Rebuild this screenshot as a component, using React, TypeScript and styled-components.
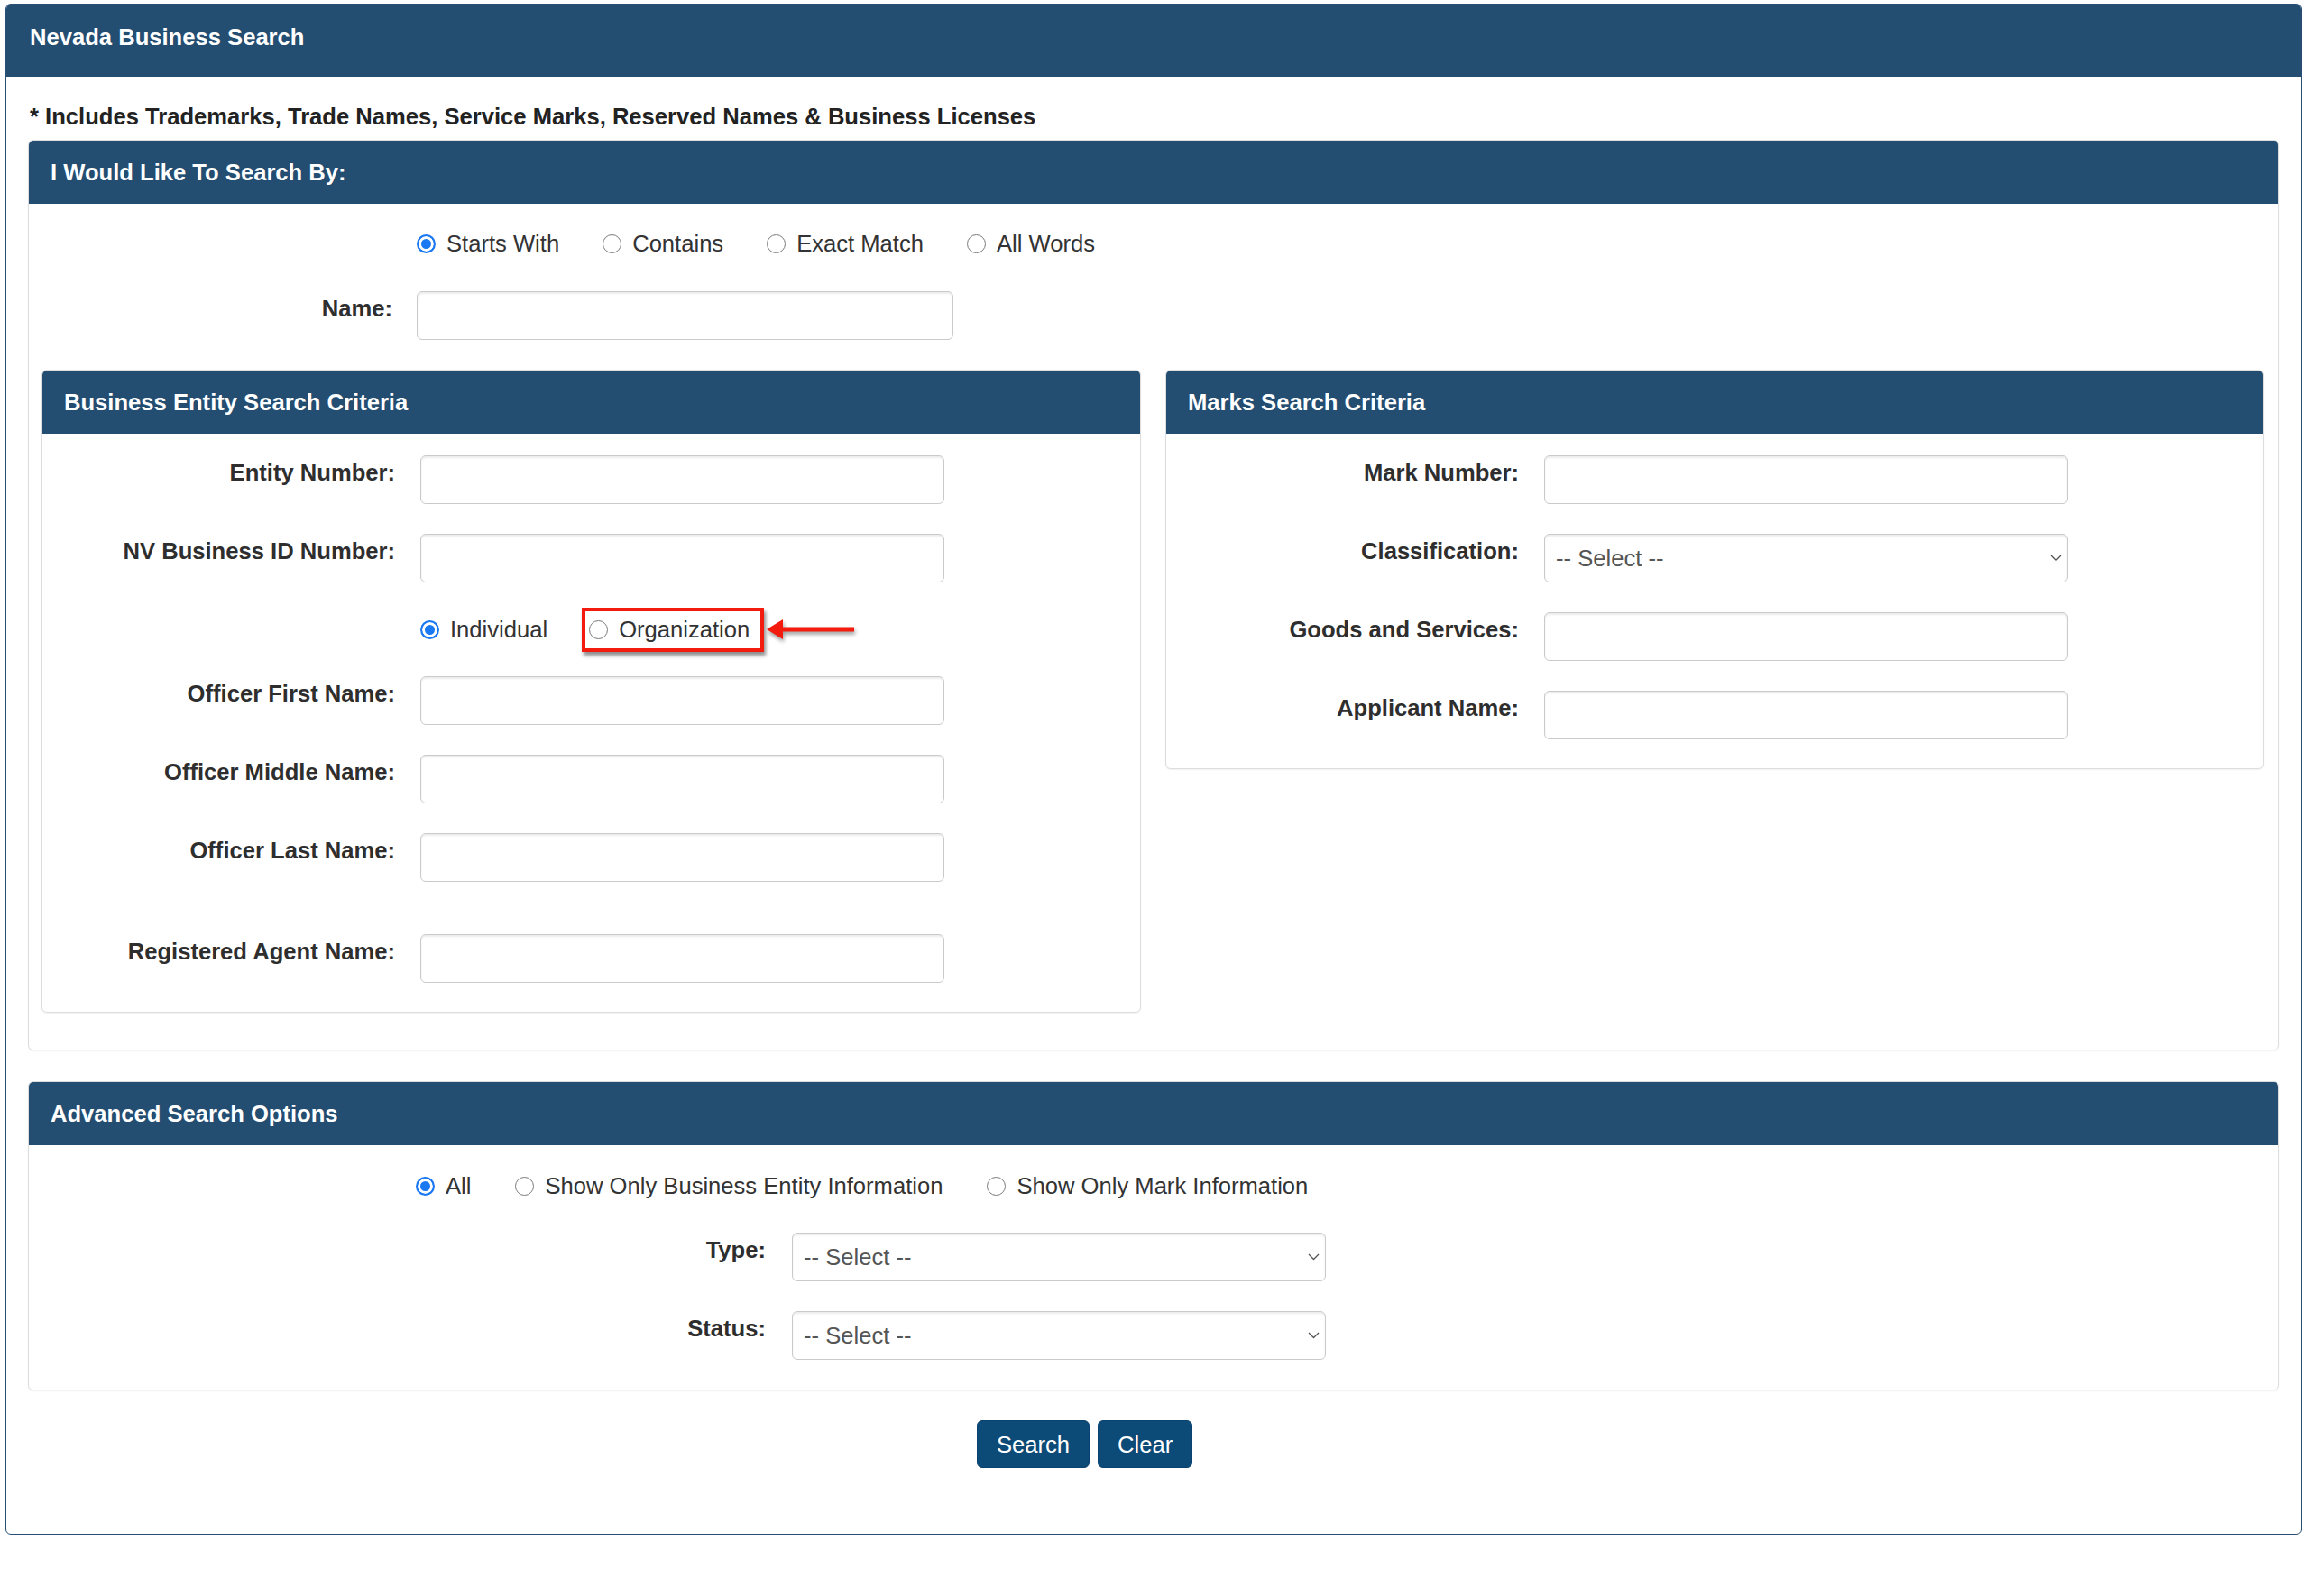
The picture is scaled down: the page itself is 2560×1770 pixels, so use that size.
import React from "react";
import styled, { createGlobalStyle } from "styled-components";

const GlobalStyle = createGlobalStyle`
  html, body {
    margin: 0;
    padding: 0;
    background: #fff;
  }
  body {
    font-family: "Liberation Sans", Arial, Helvetica, sans-serif;
    font-size: 25.6px;
    line-height: 30px;
    color: #333;
  }
  * {
    box-sizing: border-box;
  }
`;

const Page = styled.div`
  padding: 4px 8px 60px 6px;
`;

const Outer = styled.div`
  width: 2546px;
  border: 1px solid #2a4f74;
  border-radius: 6px;
  overflow: hidden;
  background: #fff;
`;

const TopBar = styled.div`
  height: 80px;
  padding: 21px 26px 0;
  background: #234d71;
  color: #fff;
  font-weight: 700;
`;

const Body = styled.div`
  padding: 29px 24px 73px;
`;

const Note = styled.div`
  font-weight: 700;
  color: #222;
  margin: 0 0 11px 2px;
`;

const Panel = styled.section<{ $mt?: number }>`
  margin-top: ${(p) => p.$mt ?? 0}px;
  border: 1px solid #ddd;
  border-radius: 6px;
  background: #fff;
  box-shadow: 0 1px 2px rgba(0, 0, 0, 0.06);
  overflow: hidden;
`;

const PanelHeading = styled.div`
  height: 70px;
  padding: 20px 24px;
  background: #234d71;
  color: #fff;
  font-weight: 700;
`;

const PanelBody = styled.div<{ $pt: number; $pb: number }>`
  padding: ${(p) => p.$pt}px 0 ${(p) => p.$pb}px;
`;

const FormRow = styled.div<{ $label: number; $control: number; $gap: number; $mt?: number }>`
  display: grid;
  grid-template-columns: ${(p) => p.$label}px ${(p) => p.$control}px;
  column-gap: ${(p) => p.$gap}px;
  margin-top: ${(p) => p.$mt ?? 0}px;
`;

const Label = styled.label`
  grid-column: 1;
  text-align: right;
  font-weight: 700;
  color: #2e2e2e;
  padding-top: 4px;
  white-space: nowrap;
`;

const Control = styled.div`
  grid-column: 2;
  position: relative;
`;

const TextInput = styled.input`
  display: block;
  width: 100%;
  height: 54px;
  padding: 0 12px;
  border: 1px solid #cacaca;
  border-radius: 6px;
  box-shadow: inset 0 2px 2px rgba(0, 0, 0, 0.08);
  font: inherit;
  color: #555;
  background: #fff;
`;

const Select = styled.select`
  display: block;
  width: 100%;
  height: 54px;
  padding: 0 40px 0 12px;
  border: 1px solid #cacaca;
  border-radius: 6px;
  box-shadow: inset 0 2px 2px rgba(0, 0, 0, 0.08);
  font: inherit;
  color: #555;
  background: #fff;
  appearance: none;
`;

const Chevron = styled.svg`
  position: absolute;
  right: 7px;
  top: 50%;
  transform: translateY(-50%);
  pointer-events: none;
`;

const RadioGroup = styled.div<{ $gap: number; $h: number }>`
  grid-column: 2;
  display: flex;
  align-items: center;
  gap: ${(p) => p.$gap}px;
  height: ${(p) => p.$h}px;
  white-space: nowrap;
`;

const RadioItem = styled.label`
  display: inline-flex;
  align-items: center;
  gap: 12px;
  color: #333;
`;

const RadioDot = styled.input.attrs({ type: "radio" })`
  appearance: none;
  margin: 0;
  width: 21px;
  height: 21px;
  border-radius: 50%;
  border: 1.5px solid #7a7a7a;
  background: #fff;
  flex: none;
  &:checked {
    border: 2px solid #1a78f2;
    background: #1a78f2;
    box-shadow: inset 0 0 0 3px #fff;
  }
`;

const Highlight = styled.span`
  display: inline-flex;
  align-items: center;
  height: 49px;
  padding: 0 12px 0 4px;
  border: 4px solid #f21b0d;
  box-shadow: 2px 4px 4px rgba(0, 0, 0, 0.45);
`;

const Arrow = styled.svg`
  margin-left: -35px;
  filter: drop-shadow(1px 3px 2px rgba(0, 0, 0, 0.4));
`;

const SubRow = styled.div`
  display: grid;
  grid-template-columns: 1219px 1218px;
  column-gap: 27px;
  align-items: start;
  padding: 0 14px;
  margin-top: 33px;
`;

const ButtonRow = styled.div`
  display: flex;
  gap: 9px;
  margin-top: 33px;
  padding-left: 1052px;
`;

const Button = styled.button`
  height: 53px;
  padding: 0 21px;
  border: 1px solid #0a4270;
  border-radius: 6px;
  background: #0c4a78;
  color: #fff;
  font: inherit;
`;

const SelectBox = () => (
  <>
    <Select defaultValue="">
      <option value="">-- Select --</option>
    </Select>
    <Chevron width="13" height="8" viewBox="0 0 13 8">
      <path d="M1 1 L6.5 6.5 L12 1" fill="none" stroke="#555" strokeWidth="1.3" />
    </Chevron>
  </>
);

type Field = { label: string; select?: boolean; mt?: number };

const entityFieldsTop: Field[] = [
  { label: "Entity Number:" },
  { label: "NV Business ID Number:", mt: 33 },
];

const entityFieldsBottom: Field[] = [
  { label: "Officer First Name:", mt: 33 },
  { label: "Officer Middle Name:", mt: 33 },
  { label: "Officer Last Name:", mt: 33 },
  { label: "Registered Agent Name:", mt: 58 },
];

const markFields: Field[] = [
  { label: "Mark Number:" },
  { label: "Classification:", select: true, mt: 33 },
  { label: "Goods and Services:", mt: 33 },
  { label: "Applicant Name:", mt: 33 },
];

const SubFields = ({ fields }: { fields: Field[] }) => (
  <>
    {fields.map((f) => (
      <FormRow key={f.label} $label={391} $control={581} $gap={28} $mt={f.mt}>
        <Label>{f.label}</Label>
        <Control>{f.select ? <SelectBox /> : <TextInput type="text" />}</Control>
      </FormRow>
    ))}
  </>
);

const App = () => {
  return (
    <Page>
      <GlobalStyle />
      <Outer>
        <TopBar>Nevada Business Search</TopBar>
        <Body>
          <Note>* Includes Trademarks, Trade Names, Service Marks, Reserved Names &amp; Business Licenses</Note>

          <Panel>
            <PanelHeading>I Would Like To Search By:</PanelHeading>
            <PanelBody $pt={29} $pb={41}>
              <FormRow $label={403} $control={1200} $gap={27}>
                <RadioGroup $gap={48} $h={30}>
                  <RadioItem>
                    <RadioDot name="searchBy" defaultChecked />
                    Starts With
                  </RadioItem>
                  <RadioItem>
                    <RadioDot name="searchBy" />
                    Contains
                  </RadioItem>
                  <RadioItem>
                    <RadioDot name="searchBy" />
                    Exact Match
                  </RadioItem>
                  <RadioItem>
                    <RadioDot name="searchBy" />
                    All Words
                  </RadioItem>
                </RadioGroup>
              </FormRow>
              <FormRow $label={403} $control={595} $gap={27} $mt={38}>
                <Label>Name:</Label>
                <Control>
                  <TextInput type="text" />
                </Control>
              </FormRow>

              <SubRow>
                <Panel>
                  <PanelHeading>Business Entity Search Criteria</PanelHeading>
                  <PanelBody $pt={24} $pb={32}>
                    <SubFields fields={entityFieldsTop} />
                    <FormRow $label={391} $control={700} $gap={28} $mt={33}>
                      <RadioGroup $gap={38} $h={38}>
                        <RadioItem>
                          <RadioDot name="officer" defaultChecked />
                          Individual
                        </RadioItem>
                        <Highlight>
                          <RadioItem>
                            <RadioDot name="officer" />
                            Organization
                          </RadioItem>
                        </Highlight>
                        <Arrow width="100" height="24" viewBox="0 0 100 24">
                          <polygon points="0,12 18,1 18,23" fill="#f21b0d" />
                          <rect x="16" y="9.5" width="81" height="5" fill="#f21b0d" />
                        </Arrow>
                      </RadioGroup>
                    </FormRow>
                    <SubFields fields={entityFieldsBottom} />
                  </PanelBody>
                </Panel>

                <Panel>
                  <PanelHeading>Marks Search Criteria</PanelHeading>
                  <PanelBody $pt={24} $pb={32}>
                    <SubFields fields={markFields} />
                  </PanelBody>
                </Panel>
              </SubRow>
            </PanelBody>
          </Panel>

          <Panel $mt={34}>
            <PanelHeading>Advanced Search Options</PanelHeading>
            <PanelBody $pt={30} $pb={33}>
              <FormRow $label={402} $control={1400} $gap={27}>
                <RadioGroup $gap={49} $h={30}>
                  <RadioItem>
                    <RadioDot name="show" defaultChecked />
                    All
                  </RadioItem>
                  <RadioItem>
                    <RadioDot name="show" />
                    Show Only Business Entity Information
                  </RadioItem>
                  <RadioItem>
                    <RadioDot name="show" />
                    Show Only Mark Information
                  </RadioItem>
                </RadioGroup>
              </FormRow>
              <FormRow $label={817} $control={592} $gap={29} $mt={37}>
                <Label>Type:</Label>
                <Control>
                  <SelectBox />
                </Control>
              </FormRow>
              <FormRow $label={817} $control={592} $gap={29} $mt={33}>
                <Label>Status:</Label>
                <Control>
                  <SelectBox />
                </Control>
              </FormRow>
            </PanelBody>
          </Panel>

          <ButtonRow>
            <Button type="button">Search</Button>
            <Button type="button">Clear</Button>
          </ButtonRow>
        </Body>
      </Outer>
    </Page>
  );
};

export default App;
